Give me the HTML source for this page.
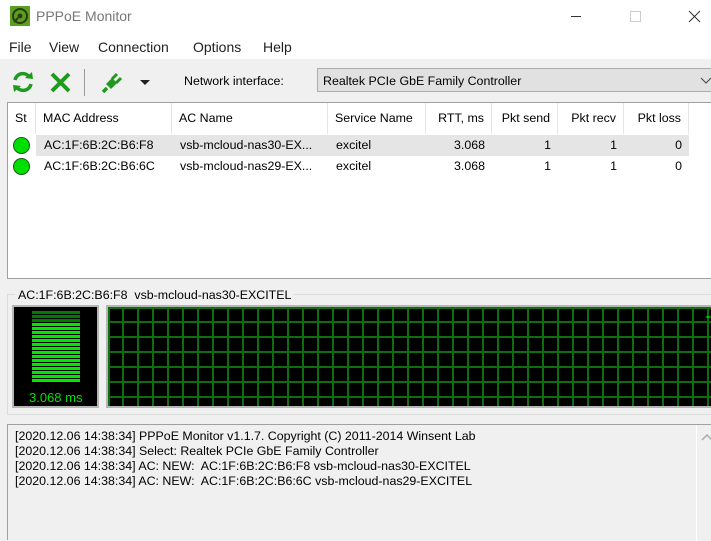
<!DOCTYPE html>
<html><head><meta charset="utf-8"><style>
*{margin:0;padding:0;box-sizing:border-box}
body{width:711px;height:540px;overflow:hidden;background:#f0f0f0;font-family:"Liberation Sans",sans-serif;font-size:12.4px;color:#000;position:relative}
.abs{position:absolute}
.title{left:0;top:0;width:711px;height:37px;background:#fff}
.menu{left:0;top:37px;width:711px;height:22px;background:#fff;font-size:14px;color:#222}
.menu span{position:absolute;top:2px}
.lv{left:7px;top:102px;width:704px;height:177px;background:#fff;border:1px solid #a0a0a0;border-right:none}
.hd{position:absolute;top:0;height:31px;line-height:31px;border-right:1px solid #e5e5e5;padding:0 7px;white-space:nowrap}
.r{text-align:right}
.cell{position:absolute;height:21px;line-height:21px;white-space:nowrap}
.dot{position:absolute;width:17px;height:17px;border-radius:50%;background:#00e000;border:1px solid #1a5a1a}
.log{left:7px;top:424px;width:704px;height:116px;border:1px solid #a0a0a0;border-right:none;border-bottom:none;background:#f0f0f0}
.log div{position:absolute;left:7px;white-space:nowrap}
</style></head><body>
<div class="abs title">
<svg class="abs" style="left:10px;top:6px" width="20" height="20" viewBox="0 0 20 20"><rect width="20" height="20" fill="#5a9e22"/><circle cx="10" cy="10" r="7" fill="none" stroke="#2d3d10" stroke-width="2"/><circle cx="10" cy="10" r="2.5" fill="#2d3d10"/><path d="M4 16 L8 12" stroke="#2d3d10" stroke-width="2"/></svg>
<span class="abs" style="left:36px;top:8px;font-size:14px;color:#777">PPPoE Monitor</span>
<div class="abs" style="left:571px;top:16px;width:10px;height:1px;background:#333"></div>
<div class="abs" style="left:630px;top:11px;width:11px;height:11px;border:1px solid #ccc"></div>
<svg class="abs" style="left:688px;top:10px" width="13" height="13"><path d="M1 1L12 12M12 1L1 12" stroke="#333" stroke-width="1"/></svg>
</div>
<div class="abs menu"><span style="left:9px">File</span><span style="left:49px">View</span><span style="left:98px">Connection</span><span style="left:193px">Options</span><span style="left:263px">Help</span></div>
<svg class="abs" style="left:11px;top:70px" width="24" height="24" viewBox="0 0 24 24"><path d="M4 10 A8 8 0 0 1 19 8" fill="none" stroke="#1f9a1f" stroke-width="3.5"/><path d="M20 14 A8 8 0 0 1 5 16" fill="none" stroke="#1f9a1f" stroke-width="3.5"/><path d="M14 8 L22 9 L21 2Z" fill="#1f9a1f"/><path d="M10 16 L2 15 L3 22Z" fill="#1f9a1f"/></svg>
<svg class="abs" style="left:50px;top:72px" width="21" height="21" viewBox="0 0 21 21"><path d="M2 2L19 19M19 2L2 19" stroke="#1f9a1f" stroke-width="4"/></svg>
<div class="abs" style="left:84px;top:69px;width:1px;height:27px;background:#999"></div>
<svg class="abs" style="left:101px;top:71px" width="22" height="23" viewBox="0 0 22 23"><path d="M2 21 L6 17" stroke="#1f9a1f" stroke-width="3.5"/><path d="M5 13 L11 7 L16 12 L10 18Z" fill="#1f9a1f"/><path d="M11 8 L16 3 M15 12 L20 7" stroke="#1f9a1f" stroke-width="3"/></svg>
<svg class="abs" style="left:140px;top:80px" width="10" height="6"><path d="M0 0H10L5 5Z" fill="#222"/></svg>
<span class="abs" style="left:184px;top:74px">Network interface:</span>
<div class="abs" style="left:317px;top:68px;width:400px;height:24px;background:#e1e1e1;border:1px solid #adadad"><span class="abs" style="left:5px;top:5px">Realtek PCIe GbE Family Controller</span><svg class="abs" style="left:382px;top:8px" width="12" height="8"><path d="M1 1L6 6L11 1" fill="none" stroke="#444"/></svg></div>
<div class="abs lv">
<div class="hd" style="left:0;width:28px">St</div>
<div class="hd" style="left:28px;width:136px">MAC Address</div>
<div class="hd" style="left:164px;width:156px">AC Name</div>
<div class="hd" style="left:320px;width:98px">Service Name</div>
<div class="hd r" style="left:418px;width:66px">RTT, ms</div>
<div class="hd r" style="left:484px;width:66px">Pkt send</div>
<div class="hd r" style="left:550px;width:66px">Pkt recv</div>
<div class="hd r" style="left:616px;width:65px">Pkt loss</div>
<div class="abs" style="left:28px;top:32px;width:653px;height:21px;background:#e5e5e5"></div>
<div class="dot" style="left:5px;top:34px"></div>
<div class="dot" style="left:5px;top:55px"></div>
<div class="cell" style="left:36px;top:32px">AC:1F:6B:2C:B6:F8</div>
<div class="cell" style="left:172px;top:32px">vsb-mcloud-nas30-EX...</div>
<div class="cell" style="left:328px;top:32px">excitel</div>
<div class="cell r" style="left:418px;width:59px;top:32px">3.068</div>
<div class="cell r" style="left:484px;width:59px;top:32px">1</div>
<div class="cell r" style="left:550px;width:59px;top:32px">1</div>
<div class="cell r" style="left:616px;width:58px;top:32px">0</div>
<div class="cell" style="left:36px;top:53px">AC:1F:6B:2C:B6:6C</div>
<div class="cell" style="left:172px;top:53px">vsb-mcloud-nas29-EX...</div>
<div class="cell" style="left:328px;top:53px">excitel</div>
<div class="cell r" style="left:418px;width:59px;top:53px">3.068</div>
<div class="cell r" style="left:484px;width:59px;top:53px">1</div>
<div class="cell r" style="left:550px;width:59px;top:53px">1</div>
<div class="cell r" style="left:616px;width:58px;top:53px">0</div>
</div>
<div class="abs" style="left:7px;top:294px;width:710px;height:121px;border:1px solid #dcdcdc"></div>
<span class="abs" style="left:15px;top:288px;background:#f0f0f0;padding:0 3px">AC:1F:6B:2C:B6:F8&nbsp; vsb-mcloud-nas30-EXCITEL</span>
<div class="abs" style="left:12px;top:305px;width:87px;height:103px;background:#000;border:2px solid #b5b5b5">
<svg class="abs" style="left:18px;top:4px" width="50" height="74">
<g fill="#007a00"><rect y="0" width="48" height="3"/><rect y="4" width="48" height="3"/><rect y="8" width="48" height="3"/></g>
<g fill="#00e800"><rect y="12" width="48" height="3"/><rect y="16" width="48" height="3"/><rect y="20" width="48" height="3"/><rect y="24" width="48" height="3"/><rect y="28" width="48" height="3"/><rect y="32" width="48" height="3"/><rect y="36" width="48" height="3"/><rect y="40" width="48" height="3"/><rect y="44" width="48" height="3"/><rect y="48" width="48" height="3"/><rect y="52" width="48" height="3"/><rect y="56" width="48" height="3"/><rect y="60" width="48" height="3"/><rect y="64" width="48" height="3"/><rect y="68" width="48" height="3"/></g>
</svg>
<span class="abs" style="left:15px;top:83px;color:#00e000;font-size:13px">3.068 ms</span>
</div>
<svg class="abs" style="left:106px;top:305px" width="605" height="103">
<rect width="605" height="103" fill="#b5b5b5"/><rect x="2" y="2" width="603" height="99" fill="#000"/>
<g stroke="#0d6e0d" stroke-width="2">
<path d="M2 3H605M2 17H605M2 32H605M2 47H605M2 62H605M2 77H605M2 92H605"/>
<path d="M3 2V101M17 2V101M32 2V101M47 2V101M62 2V101M77 2V101M92 2V101M107 2V101M122 2V101M137 2V101M152 2V101M167 2V101M182 2V101M197 2V101M212 2V101M227 2V101M242 2V101M257 2V101M272 2V101M287 2V101M302 2V101M317 2V101M332 2V101M347 2V101M362 2V101M377 2V101M392 2V101M407 2V101M422 2V101M437 2V101M452 2V101M467 2V101M482 2V101M497 2V101M512 2V101M527 2V101M542 2V101M557 2V101M572 2V101M587 2V101M602 2V101"/>
</g>
<path d="M600 12H605" stroke="#00ff00" stroke-width="1"/>
</svg>
<div class="abs log">
<div style="top:4px">[2020.12.06 14:38:34] PPPoE Monitor v1.1.7. Copyright (C) 2011-2014 Winsent Lab</div>
<div style="top:19px">[2020.12.06 14:38:34] Select: Realtek PCIe GbE Family Controller</div>
<div style="top:34px">[2020.12.06 14:38:34] AC: NEW:&nbsp; AC:1F:6B:2C:B6:F8 vsb-mcloud-nas30-EXCITEL</div>
<div style="top:49px">[2020.12.06 14:38:34] AC: NEW:&nbsp; AC:1F:6B:2C:B6:6C vsb-mcloud-nas29-EXCITEL</div>
<div style="left:688px;top:0;width:1px;height:116px;background:#fff"></div>
<svg class="abs" style="left:693px;top:8px" width="12" height="8"><path d="M1 7L6 2L11 7" fill="none" stroke="#aaa" stroke-width="1.5"/></svg>
</div>
</body></html>
